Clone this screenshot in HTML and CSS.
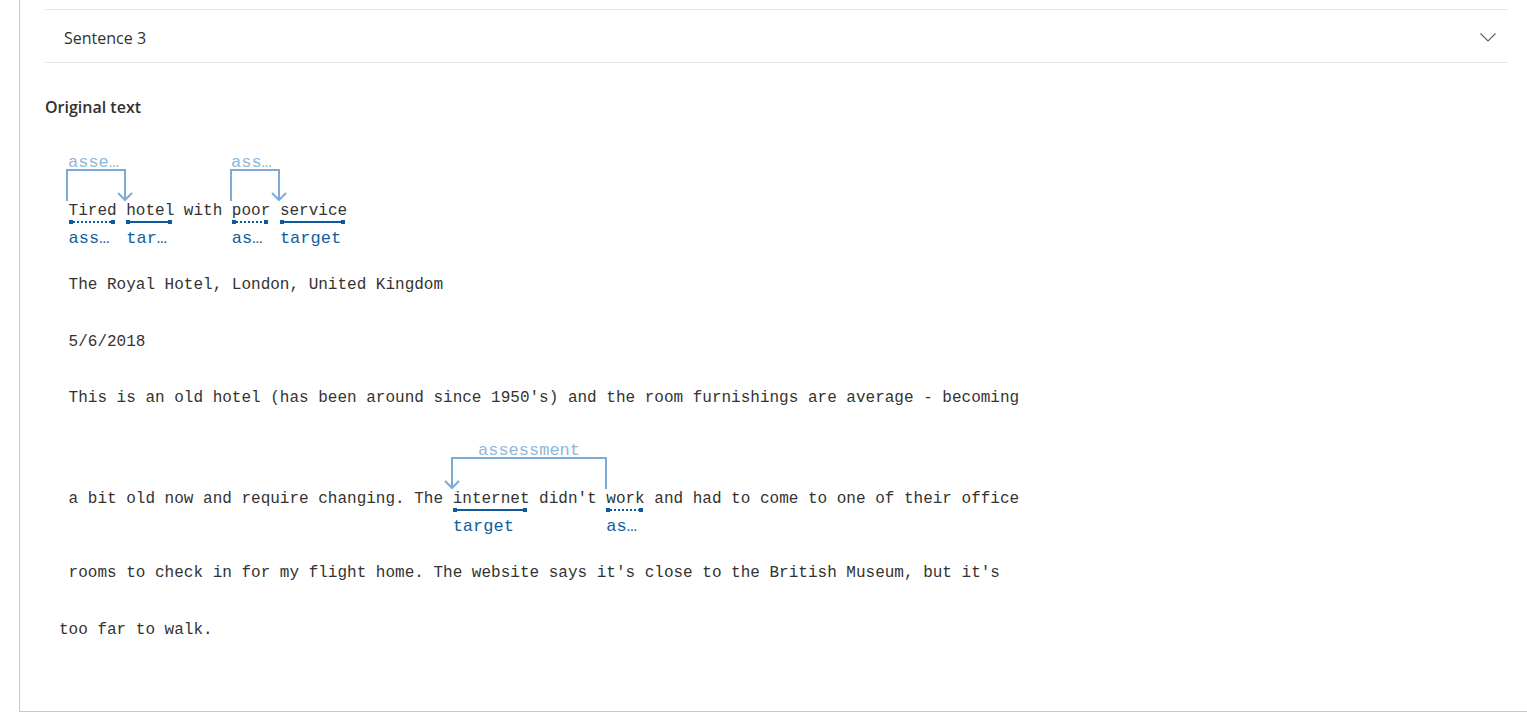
FILE: index.html
```html
<!DOCTYPE html>
<html lang="en">
<head>
<meta charset="utf-8">
<title>Sentence 3</title>
<link rel="stylesheet" href="styles.css">
</head>
<body>
<div class="panel">
  <div class="acc-head">
    <span class="acc-title">Sentence 3</span>
    <svg class="chev" width="16" height="9" viewBox="0 0 16 9"><polyline points="0.5,0.5 8,8 15.5,0.5" fill="none" stroke="#605e5c" stroke-width="1.1"/></svg>
  </div>
  <h2 class="section-title">Original text</h2>
  <div class="doc">
    <div class="ln annot l1"><svg class="arcs" width="1000" height="50" viewBox="0 0 1000 50"><g fill="none" stroke="#7eaad4" stroke-width="2"><path d="M8 50 V19 H66 V49"/><polyline points="59,42 66,49 73,42"/><path d="M172 50 V19 H220 V49"/><polyline points="213,42 220,49 227,42"/></g><g class="arc-lab"><text x="9" y="16">asse…</text><text x="172" y="16">ass…</text></g></svg><span> </span><span class="tok">Tired<span class="ul dotted"></span><span class="lab">ass…</span></span><span> </span><span class="tok">hotel<span class="ul solid"></span><span class="lab">tar…</span></span><span> with </span><span class="tok">poor<span class="ul dotted"></span><span class="lab">as…</span></span><span> </span><span class="tok">service<span class="ul solid"></span><span class="lab">target</span></span></div>
    <div class="ln l-royal"> The Royal Hotel, London, United Kingdom</div>
    <div class="ln l-date"> 5/6/2018</div>
    <div class="ln l-this"> This is an old hotel (has been around since 1950's) and the room furnishings are average - becoming</div>
    <div class="ln annot l2"><svg class="arcs" width="1000" height="50" viewBox="0 0 1000 50"><g fill="none" stroke="#7eaad4" stroke-width="2"><path d="M547 50 V19 H393 V49"/><polyline points="386,42 393,49 400,42"/></g><g class="arc-lab"><text x="470" y="16" text-anchor="middle">assessment</text></g></svg><span> a bit old now and require changing. The </span><span class="tok">internet<span class="ul solid"></span><span class="lab">target</span></span><span> didn't </span><span class="tok">work<span class="ul dotted"></span><span class="lab">as…</span></span><span> and had to come to one of their office</span></div>
    <div class="ln l-rooms"> rooms to check in for my flight home. The website says it's close to the British Museum, but it's</div>
    <div class="ln l-far">too far to walk.</div>
  </div>
</div>
</body>
</html>
```
FILE: styles.css
```css
html, body {
  margin: 0;
  padding: 0;
  background: #ffffff;
  overflow: hidden;
}

body {
  font-family: "Open Sans", "Noto Sans", sans-serif;
  color: #323130;
}

.panel {
  margin-left: 19px;
  border-left: 1px solid #c8c8c8;
  border-bottom: 1px solid #c8c8c8;
  padding: 9px 19px 71px 25px;
}

.acc-head {
  display: flex;
  align-items: center;
  justify-content: space-between;
  height: 52px;
  padding: 0 12px 0 19px;
  border-top: 1px solid #e6e6e6;
  border-bottom: 1px solid #e6e6e6;
}

.acc-title {
  font-size: 16px;
  margin-top: 3px;
  color: #323130;
}

.chev {
  display: block;
  margin-top: 2px;
}

.section-title {
  margin: 34px 0 0 0;
  font-size: 16px;
  line-height: 20px;
  font-weight: 600;
  color: #323130;
}

.doc {
  margin-left: 14px;
  font-family: "Liberation Mono", "DejaVu Sans Mono", monospace;
  font-size: 16px;
  color: #333333;
}

.ln {
  position: relative;
  height: 20px;
  line-height: 20px;
  white-space: pre;
}

.annot {
  padding: 50px 0 30px 0;
}

.l1 { margin-top: 34px; }
.l-royal { margin-top: 24px; }
.l-date { margin-top: 37px; }
.l-this { margin-top: 36px; }
.l2 { margin-top: 31px; }
.l-rooms { margin-top: 24px; }
.l-far { margin-top: 37px; }

.arcs {
  position: absolute;
  left: 0;
  top: 0;
  overflow: visible;
}

.arc-lab text {
  font-family: "Liberation Mono", "DejaVu Sans Mono", monospace;
  font-size: 17px;
  fill: #8fb6dc;
}

.tok {
  position: relative;
}

.ul {
  position: absolute;
  left: 0;
  right: 2px;
  top: 19px;
  height: 2px;
}

.ul.solid {
  background: #0e5a9c;
}

.ul.dotted {
  background: repeating-linear-gradient(to right, #0e5a9c 0 2px, transparent 2px 4px);
}

.ul::before,
.ul::after {
  content: "";
  position: absolute;
  top: -1px;
  width: 4px;
  height: 4px;
  background: #0e5a9c;
}

.ul::before { left: 0; }
.ul::after { right: 0; }

.lab {
  position: absolute;
  left: 0;
  top: 27px;
  font-size: 17px;
  line-height: 20px;
  color: #10609f;
  white-space: pre;
}
```
